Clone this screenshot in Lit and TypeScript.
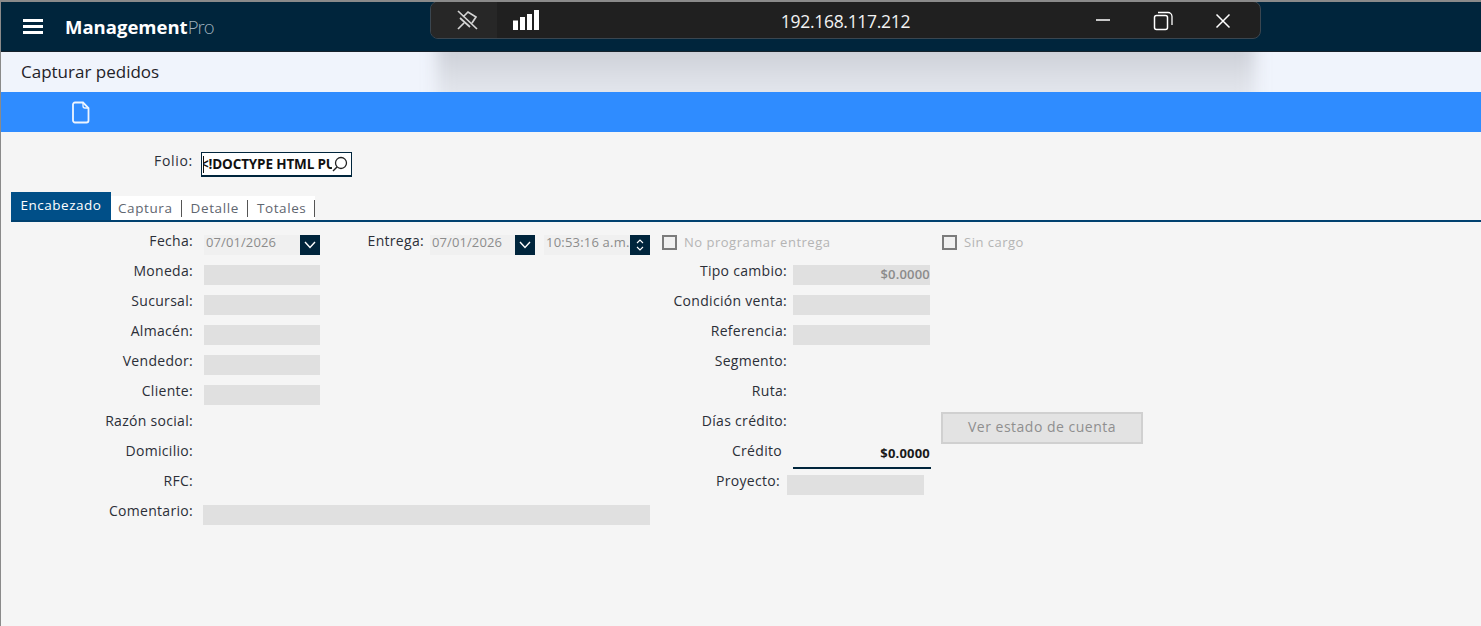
import { LitElement, css, html } from 'lit'
import { customElement } from 'lit/decorators.js'

const chevron = html`<svg width="14" height="10" viewBox="0 0 14 10"><path d="M2 2l5 5.500L12 2" fill="none" stroke="#fff" stroke-width="1.400"/></svg>`

@customElement('app-root')
export class AppRoot extends LitElement {
  static styles = css`
    :host {
      display: block;
      font-family: 'Open Sans', 'Liberation Sans', sans-serif;
      font-size: 14px;
      letter-spacing: 0.3px;
      color: #2b2f38;
    }
    .page {
      position: relative;
      height: 626px;
      box-sizing: border-box;
      border-top: 2px solid #8a8a8a;
      border-left: 1px solid #8a8a8a;
      background: #f5f5f5;
      overflow: hidden;
    }
    .header {
      height: 50px;
      background: #00253c;
      display: flex;
      align-items: center;
      padding-left: 22px;
      gap: 22px;
      border-bottom: 1px solid #16222c;
      box-sizing: border-box;
    }
    .burger { display: flex; flex-direction: column; gap: 3px; width: 20px; }
    .burger i { display: block; height: 3px; background: #fff; }
    .logo { font-size: 18.500px; font-weight: 700; color: #fff; letter-spacing: 0; }
    .logo span { font-weight: 300; color: #9fb0bc; letter-spacing: -1px; }
    .title {
      position: relative;
      height: 40px;
      background: #f0f4fc;
      overflow: hidden;
      padding-left: 20px;
      font-size: 17px;
      letter-spacing: 0;
      line-height: 40px;
      color: #1f2228;
    }
    .shade {
      position: absolute;
      left: 436px;
      top: -14px;
      width: 818px;
      height: 76px;
      background: linear-gradient(#c6c9d1, #dfe2e9 60%, #e8ebf2);
      filter: blur(8px);
    }
    .title-text { position: relative; }
    .actions {
      height: 40px;
      background: #2f8cff;
      display: flex;
      align-items: center;
      padding-left: 71px;
    }
    .folio {
      display: flex;
      padding-top: 20px;
      height: 40px;
      align-items: flex-start;
    }
    .folio label { width: 192px; text-align: right; line-height: 18px; letter-spacing: 0.700px; }
    .folio-input {
      margin-left: 8px;
      width: 151px;
      height: 25px;
      box-sizing: border-box;
      border: 2px solid #00253c;
      border-width: 1px 1px 2px 1px;
      background: #fff;
      display: flex;
      align-items: center;
      position: relative;
      font-weight: 700;
      font-size: 13.500px;
      color: #111;
      letter-spacing: -0.150px;
      white-space: nowrap;
    }
    .folio-input .txt {
      width: 128px;
      overflow: hidden;
      border-left: 1px solid #111;
      margin-left: 1px;
      line-height: 17px;
      text-indent: -3px;
    }
    .folio-input svg { position: absolute; left: 128px; top: 3px; }
    .tabs {
      display: flex;
      align-items: flex-end;
      margin-left: 10px;
      height: 30px;
      border-bottom: 2px solid #00416f;
      box-sizing: border-box;
    }
    .tab-active {
      width: 100px;
      height: 28px;
      background: #004f88;
      color: #fff;
      text-align: center;
      line-height: 27px;
      font-size: 13.500px;
      letter-spacing: 0.500px;
    }
    .tab {
      height: 24px;
      background: #fff;
      color: #5f6670;
      line-height: 24px;
      padding-left: 9px;
      font-size: 13.500px;
      letter-spacing: 0.600px;
    }
    .tab-active + .tab { padding-left: 7px; }
    .tab::after {
      content: '';
      display: inline-block;
      width: 1px;
      height: 17px;
      background: #555;
      margin-left: 8px;
      vertical-align: -4px;
    }
    .form {
      display: grid;
      grid-template-columns: 192px 457px 137px 143px 1fr;
      grid-auto-rows: 30px;
      padding-top: 13px;
    }
    .lbl {
      grid-column: 1;
      text-align: right;
      line-height: 18px;
      margin-top: -3px;
    }
    .lbl2 { grid-column: 3; }
    .first { grid-column: 2; display: flex; padding-left: 11px; }
    .fld {
      height: 20px;
      background: #e0e0e0;
      margin-left: 11px;
      width: 116px;
    }
    .fld.long { width: 447px; margin-left: 10px; }
    .fld2 {
      grid-column: 4;
      height: 20px;
      width: 137px;
      margin-left: 6px;
      background: #e0e0e0;
      font-size: 13px;
      font-weight: 600;
      line-height: 18px;
      text-align: right;
      color: #8b8b8b;
      letter-spacing: 0.200px;
    }
    .date {
      display: flex;
      flex: none;
      height: 20px;
      background: #f0f0f0;
      color: #8c8c8c;
      font-size: 13px;
      letter-spacing: 0.100px;
      line-height: 15px;
    }
    .date .v { padding-left: 2px; width: 96px; box-sizing: border-box; }
    .btn { width: 20px; height: 20px; background: #00253c; display: flex; align-items: center; justify-content: center; }
    .entrega { flex: none; width: 104px; text-align: right; line-height: 18px; margin-top: -3px; }
    .date.b { margin-left: 6px; }
    .date.b .v { width: 85px; }
    .date.c { margin-left: 9px; }
    .date.c .v { width: 86px; white-space: nowrap; letter-spacing: 0.200px; }
    .chk {
      display: flex;
      align-items: flex-start;
      gap: 7px;
      height: 15px;
      line-height: 14px;
      color: #b4b4b4;
      letter-spacing: 0.500px;
      font-size: 13px;
    }
    .chk i { width: 11px; height: 11px; border: 2px solid #7b7b7b; background: #f0f0f0; display: block; }
    .chk.a { grid-column: 3 / 5; padding-left: 12px; }
    .chk.b { grid-column: 5; padding-left: 12px; }
    .ver {
      grid-column: 5;
      margin: -3px 0 0 11px;
      width: 202px;
      height: 32px;
      box-sizing: border-box;
      border: 2px solid #d0d0d0;
      background: #e3e3e3;
      color: #8f8f8f;
      text-align: center;
      line-height: 25px;
      letter-spacing: 0.500px;
    }
    .credito-lbl { padding-right: 5px; }
    .credito {
      grid-column: 4;
      margin: -8px 0 0 6px;
      width: 138px;
      height: 22px;
      padding-top: 8px;
      border-bottom: 2px solid #00253c;
      text-align: right;
      font-weight: 700;
      font-size: 13px;
      line-height: 16px;
      letter-spacing: 0.200px;
      color: #1a1a1a;
    }
    .credito span { padding-right: 1px; }
    .proy-lbl { padding-right: 7px; }
    .fld2.proy { margin-left: 0; }
    .bar {
      position: absolute;
      left: 429px;
      top: -1px;
      width: 831px;
      height: 38px;
      box-sizing: border-box;
      background: #202020;
      border: 1px solid #3a4650;
      border-radius: 8px;
      color: #f2f2f2;
      overflow: hidden;
    }
    .pin { position: absolute; left: 0; top: 0; width: 66px; height: 36px; background: #272727; }
    .bar svg { position: absolute; }
    .i-pin { left: 26px; top: 8px; }
    .i-sig { left: 82px; top: 8px; }
    .i-min { left: 665px; top: 16px; }
    .i-res { left: 722px; top: 9px; }
    .i-x { left: 784px; top: 11px; }
    .ip {
      position: absolute;
      left: 0;
      right: 0;
      top: 8px;
      text-align: center;
      font-size: 17.500px;
      line-height: 22px;
      letter-spacing: -0.300px;
    }
  `

  render() {
    return html`
      <div class="page">
        <div class="header">
          <div class="burger"><i></i><i></i><i></i></div>
          <div class="logo">Management<span>Pro</span></div>
        </div>
        <div class="title"><div class="shade"></div><span class="title-text">Capturar pedidos</span></div>
        <div class="actions">
          <svg width="18" height="23" viewBox="0 0 18 23"><path d="M3 1.500H11L16.500 7V19.500a2 2 0 0 1-2 2H3a2 2 0 0 1-2-2V3.500a2 2 0 0 1 2-2z" fill="none" stroke="#eef5ff" stroke-width="1.800"/><path d="M11 1.500V5a2 2 0 0 0 2 2H16.500" fill="none" stroke="#eef5ff" stroke-width="1.300"/></svg>
        </div>
        <div class="folio">
          <label>Folio:</label>
          <div class="folio-input">
            <span class="txt">&lt;!DOCTYPE HTML PUBLIC</span>
            <svg width="20" height="19" viewBox="0 0 20 19"><circle cx="11" cy="7" r="5.500" fill="#fff" stroke="#222" stroke-width="1.300"/><path d="M7 11L3 15" stroke="#222" stroke-width="1.500"/></svg>
          </div>
        </div>
        <div class="tabs">
          <div class="tab-active">Encabezado</div>
          <div class="tab">Captura</div>
          <div class="tab">Detalle</div>
          <div class="tab">Totales</div>
        </div>
        <div class="form">
          <div class="lbl">Fecha:</div>
          <div class="first">
            <div class="date"><span class="v">07/01/2026</span><span class="btn">${chevron}</span></div>
            <div class="entrega">Entrega:</div>
            <div class="date b"><span class="v">07/01/2026</span><span class="btn">${chevron}</span></div>
            <div class="date c"><span class="v">10:53:16 a.m.</span><span class="btn">
              <svg width="10" height="14" viewBox="0 0 10 14"><path d="M2 5l3-3 3 3M2 9l3 3 3-3" fill="none" stroke="#fff" stroke-width="1.100"/></svg>
            </span></div>
          </div>
          <div class="chk a"><i></i>No programar entrega</div>
          <div class="chk b"><i></i>Sin cargo</div>

          <div class="lbl">Moneda:</div><div><div class="fld"></div></div>
          <div class="lbl lbl2">Tipo cambio:</div><div class="fld2">$0.0000</div><div></div>

          <div class="lbl">Sucursal:</div><div><div class="fld"></div></div>
          <div class="lbl lbl2">Condición venta:</div><div class="fld2"></div><div></div>

          <div class="lbl">Almacén:</div><div><div class="fld"></div></div>
          <div class="lbl lbl2">Referencia:</div><div class="fld2"></div><div></div>

          <div class="lbl">Vendedor:</div><div><div class="fld"></div></div>
          <div class="lbl lbl2">Segmento:</div><div></div><div></div>

          <div class="lbl">Cliente:</div><div><div class="fld"></div></div>
          <div class="lbl lbl2">Ruta:</div><div></div><div></div>

          <div class="lbl">Razón social:</div><div></div>
          <div class="lbl lbl2">Días crédito:</div><div></div><div class="ver">Ver estado de cuenta</div>

          <div class="lbl">Domicilio:</div><div></div>
          <div class="lbl lbl2 credito-lbl">Crédito</div><div class="credito"><span>$0.0000</span></div><div></div>

          <div class="lbl">RFC:</div><div></div>
          <div class="lbl lbl2 proy-lbl">Proyecto:</div><div class="fld2 proy"></div><div></div>

          <div class="lbl">Comentario:</div><div><div class="fld long"></div></div>
        </div>
        <div class="bar">
          <div class="pin"></div>
          <svg class="i-pin" width="22" height="21" viewBox="0 0 22 21"><path d="M6 7L11 2L19 7L15 13M3 8L13 17M7 13L1 19M1 1L20 19" fill="none" stroke="#d4d4d4" stroke-width="1.700"/></svg>
          <svg class="i-sig" width="26" height="20" viewBox="0 0 26 20"><path d="M0 10.500h5V20H0zM7 7h5v13H7zM14 4h5v16h-5zM21 0h5v20h-5z" fill="#fff"/></svg>
          <div class="ip">192.168.117.212</div>
          <svg class="i-min" width="16" height="4" viewBox="0 0 16 4"><path d="M0 2h14" stroke="#fff" stroke-width="1.600"/></svg>
          <svg class="i-res" width="20" height="20" viewBox="0 0 20 20"><rect x="1.500" y="4.500" width="13" height="14" rx="2" fill="none" stroke="#fff" stroke-width="1.500"/><path d="M5 1.500h10a4 4 0 0 1 4 4V14" fill="none" stroke="#fff" stroke-width="1.300"/></svg>
          <svg class="i-x" width="16" height="16" viewBox="0 0 16 16"><path d="M1.500 1.500l13 13M14.500 1.500l-13 13" stroke="#fff" stroke-width="1.500"/></svg>
        </div>
      </div>
    `
  }
}
